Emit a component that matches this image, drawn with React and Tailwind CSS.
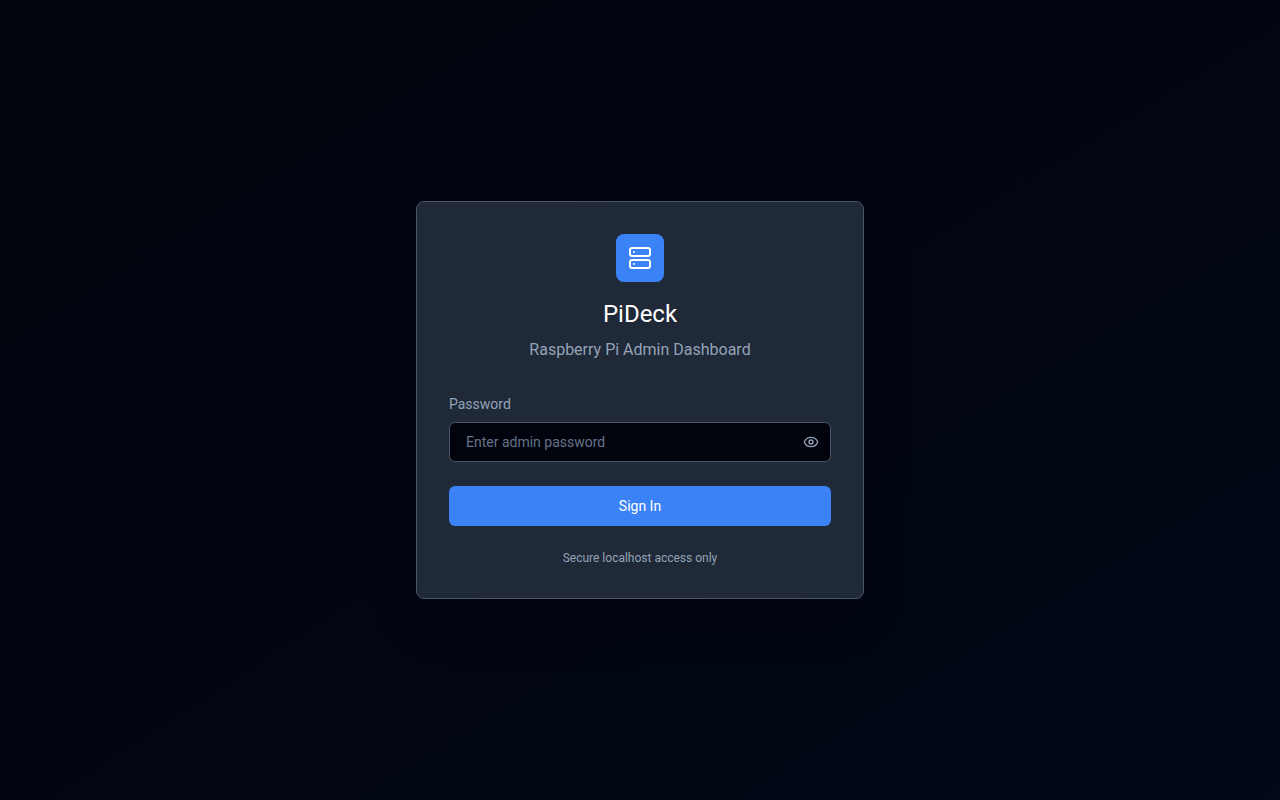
import React, { useState } from 'react';
import { Eye, EyeOff, Server } from 'lucide-react';

function PasswordField({ value, onChange }) {
  const [visible, setVisible] = useState(false);

  return (
    <div>
      <label htmlFor="password" className="block text-sm text-[#94a3b8]">
        Password
      </label>
      <div className="relative mt-2">
        <input
          id="password"
          type={visible ? 'text' : 'password'}
          value={value}
          onChange={(e) => onChange(e.target.value)}
          placeholder="Enter admin password"
          className="block h-10 w-full rounded-md border border-[#4b5563] bg-[#01040c] pl-4 pr-12 text-sm text-white placeholder:text-[#64748b] focus:outline-none focus:ring-2 focus:ring-[#3b82f6]"
        />
        <button
          type="button"
          aria-label={visible ? 'Hide password' : 'Show password'}
          onClick={() => setVisible(!visible)}
          className="absolute inset-y-0 right-0 flex items-center px-3 text-[#94a3b8] hover:text-white"
        >
          {visible ? <EyeOff className="size-4" /> : <Eye className="size-4" />}
        </button>
      </div>
    </div>
  );
}

export default function App() {
  const [password, setPassword] = useState('');

  return (
    <main className="flex min-h-screen items-center justify-center bg-linear-to-br from-[#01040c] to-[#020817] font-[Roboto,'Liberation_Sans',sans-serif]">
      <div className="w-full max-w-md rounded-lg border border-[#4b5563] bg-[#1f2937] p-8 shadow-2xl">
        {/* Logo and title */}
        <div className="mb-8 text-center">
          <div className="mx-auto mb-4 flex size-12 items-center justify-center rounded-lg bg-[#3b82f6] text-white">
            <Server className="size-6" />
          </div>
          <h1 className="text-2xl text-white">PiDeck</h1>
          <p className="mt-2 text-base text-[#94a3b8]">Raspberry Pi Admin Dashboard</p>
        </div>

        <form className="space-y-6" onSubmit={(e) => e.preventDefault()}>
          <PasswordField value={password} onChange={setPassword} />
          <button
            type="submit"
            className="block h-10 w-full rounded-md bg-[#3b82f6] text-sm text-white hover:bg-[#2563eb]"
          >
            Sign In
          </button>
        </form>

        <p className="mt-6 text-center text-xs text-[#94a3b8]">Secure localhost access only</p>
      </div>
    </main>
  );
}
